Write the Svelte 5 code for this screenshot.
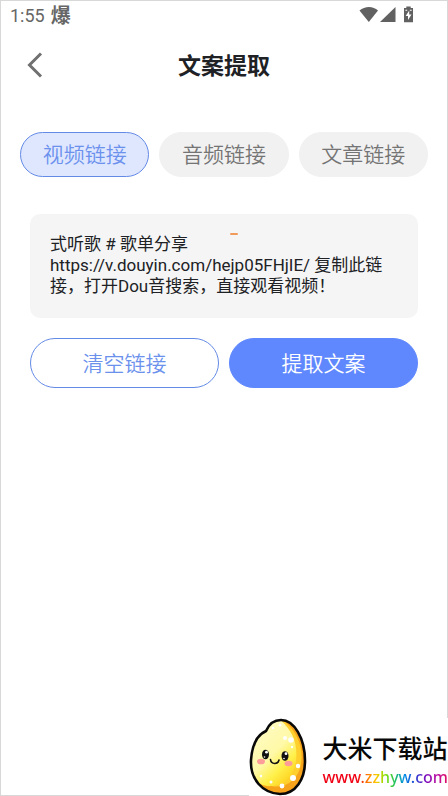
<script>
  const tabs = ['视频链接', '音频链接', '文章链接'];
  let active = $state(0);
  let text = $state('式听歌 # 歌单分享 https://v.douyin.com/hejp05FHjIE/ 复制此链接，打开Dou音搜索，直接观看视频！');
</script>

<div class="screen">
  <div class="status">
    <span class="time">1:55</span>
    <span class="badge">爆</span>
    <svg class="signals" width="56" height="18" viewBox="0 0 56 18" fill="#616161" aria-hidden="true">
      <path d="M0.5 4.6C5.8-.3 14.2-.3 19 4.6L9.8 16z" />
      <path d="M36.500 1v15H21z" />
      <path d="M47.3.5h4.4V2H54v14.2h-9V2h2.3z" />
      <path d="M50.2 4.5 46.7 10h2.3v4l3.5-5.4h-2.3zM46.4 3.8h1.8v1h-1.8zM50.9 3.8h1.8v1h-1.8z" fill="#fff" />
    </svg>
  </div>

  <header>
    <button class="back" aria-label="返回">
      <svg width="16" height="26" viewBox="0 0 16 26" fill="none" stroke="#707070" stroke-width="3">
        <path d="M14 1.5 2.5 13 14 24.5" />
      </svg>
    </button>
    <h1>文案提取</h1>
  </header>

  <nav class="tabs">
    {#each tabs as tab, i}
      <button class="tab" class:active={active === i} aria-pressed={active === i} onclick={() => (active = i)}>{tab}</button>
    {/each}
  </nav>

  <main>
    <div class="field">
      <textarea aria-label="链接" rows="3" spellcheck="false" bind:value={text}></textarea>
      <span class="dash"></span>
    </div>
    <div class="actions">
      <button class="clear" onclick={() => (text = '')}>清空链接</button>
      <button class="extract">提取文案</button>
    </div>
  </main>

  <aside class="brand">
    <svg width="58" height="78" viewBox="0 0 58 78" aria-hidden="true">
      <defs>
        <linearGradient id="rice" x1="0.15" y1="0.1" x2="0.75" y2="1">
          <stop offset="0" stop-color="#fffbc4" />
          <stop offset="0.5" stop-color="#fff9a8" />
          <stop offset="0.75" stop-color="#fff04a" />
          <stop offset="1" stop-color="#ffd01c" />
        </linearGradient>
        <clipPath id="grain">
          <path d="M32 2C24 2 20 6 17 13C8 17 3 28 2 42C1 61 13 75 31 76C47 76 56 61 56 43C56 20 45 2 32 2Z" />
        </clipPath>
      </defs>
      <g clip-path="url(#grain)">
        <path fill="#f7a21b" d="M0 0h58v78H0z" />
        <path fill="#ffcf2e" d="M30 0C48 10 55 30 52 46C49 62 37 71 22 68L2 56V0z" />
        <path fill="url(#rice)" d="M29 0C44 12 49 26 47 43C45 58 35 68 23 68C13 69 7 64 2 56V0z" />
        <g fill="#fff">
          <circle cx="42" cy="22" r="2.8" /><circle cx="36" cy="20" r="2" />
          <circle cx="31" cy="7" r="1.5" /><circle cx="24" cy="10" r="1.2" />
          <circle cx="43" cy="29" r="1.2" /><circle cx="49" cy="48" r="2.2" />
          <circle cx="44" cy="60" r="3" /><circle cx="33" cy="68" r="2.4" />
          <circle cx="22" cy="64" r="1.5" /><circle cx="12" cy="58" r="1.2" />
        </g>
      </g>
      <path d="M32 2C24 2 20 6 17 13C8 17 3 28 2 42C1 61 13 75 31 76C47 76 56 61 56 43C56 20 45 2 32 2Z" fill="none" stroke="#080808" stroke-width="2.6" />
      <ellipse cx="12" cy="43.5" rx="4" ry="2.8" fill="#ff9d98" />
      <ellipse cx="39.5" cy="45.5" rx="4" ry="2.8" fill="#ff9d98" />
      <ellipse cx="16.5" cy="36.5" rx="3.5" ry="4.8" fill="#111" />
      <ellipse cx="36" cy="38" rx="3.5" ry="4.8" fill="#111" />
      <circle cx="17.5" cy="34.2" r="1.4" fill="#fff" /><circle cx="37" cy="35.7" r="1.4" fill="#fff" />
      <circle cx="15.5" cy="39" r="0.8" fill="#fff" /><circle cx="35" cy="40.5" r="0.8" fill="#fff" />
      <path d="M21.5 41.5c.5 5 7.5 5.3 8.500 .5" fill="none" stroke="#111" stroke-width="1.6" stroke-linecap="round" />
    </svg>
    <div class="words">
      <strong>大米下载站</strong>
      <a href="http://www.zzhyw.com">www.zzhyw.com</a>
    </div>
  </aside>
</div>

<style>
  :global(body) {
    margin: 0;
    background: #fff;
  }
  .screen, .screen * {
    box-sizing: border-box;
  }
  .screen {
    position: relative;
    min-height: 100vh;
    border: 1px solid #d8d8d8;
    background: #fff;
    color: #202124;
    font-family: Roboto, "Noto Sans CJK SC", sans-serif;
  }
  button {
    margin: 0;
    padding: 0;
    border: 0;
    background: none;
    font-family: inherit;
    font-size: 21px;
    font-weight: 350;
    cursor: pointer;
  }
  .status {
    display: flex;
    align-items: center;
    height: 28px;
    padding: 0 32px 0 9px;
    color: #666;
    font-size: 18px;
  }
  .badge {
    margin-left: 6px;
    padding-top: 2px;
    font-size: 20px;
    font-weight: 700;
    line-height: 28px;
  }
  .signals {
    margin-left: auto;
  }
  header {
    display: grid;
    grid-template-columns: 48px 1fr 48px;
    align-items: center;
    height: 72px;
    padding: 0 10px;
  }
  .back {
    display: flex;
    align-items: center;
    justify-content: center;
    height: 48px;
  }
  h1 {
    margin: 0;
    padding-top: 4px;
    font-size: 23px;
    line-height: 32px;
    font-weight: 700;
    text-align: center;
  }
  .tabs {
    display: flex;
    gap: 10px;
    padding: 31px 19px 0;
  }
  .tab {
    flex: 1;
    height: 45px;
    padding-bottom: 4px;
    border: 1px solid #f1f1f1;
    border-radius: 23px;
    background: #f1f1f1;
    color: #747474;
  }
  .tab.active {
    border-color: #638ae6;
    background: #dfe7ff;
    color: #6b91ed;
  }
  main {
    padding: 37px 29px 0;
  }
  .field {
    position: relative;
    padding: 20px;
    border-radius: 10px;
    background: #f5f5f5;
  }
  textarea {
    display: block;
    width: 100%;
    height: 64px;
    padding: 0;
    border: 0;
    outline: 0;
    resize: none;
    overflow: hidden;
    background: none;
    color: #202124;
    font-family: inherit;
    font-size: 17px;
    line-height: 21px;
  }
  .dash {
    position: absolute;
    top: 19px;
    left: 200px;
    width: 8px;
    height: 2px;
    border-radius: 1px;
    background: #f09a5c;
  }
  .actions {
    display: flex;
    gap: 10px;
    margin-top: 20px;
  }
  .actions button {
    flex: 1;
    height: 50px;
    padding-bottom: 2px;
    border: 1px solid #638ae6;
    border-radius: 25px;
  }
  .actions .clear {
    color: #6b91ed;
  }
  .actions .extract {
    border-color: #5f88ff;
    background: #5f88ff;
    color: #fff;
  }
  .brand {
    position: absolute;
    right: -1px;
    bottom: -1px;
    display: flex;
    gap: 15px;
    align-items: center;
    height: 78px;
    background: #fff;
  }
  .words {
    display: flex;
    flex-direction: column;
    padding-top: 8px;
  }
  strong {
    color: #080808;
    font-size: 25px;
    line-height: 32px;
    font-weight: 500;
  }
  .words a {
    background: linear-gradient(90deg, #f00014 0 28%, #ff6a00 35%, #ffc800 43%, #8be000 50%, #28c850 57%, #0090e8 65%, #2040d0 74%, #7a10c0 82%, #c010a0 92%, #e01060);
    background-clip: text;
    color: transparent;
    font-family: "Noto Sans", sans-serif;
    font-size: 16px;
    font-weight: 500;
    line-height: 22px;
    text-decoration: none;
  }
</style>
